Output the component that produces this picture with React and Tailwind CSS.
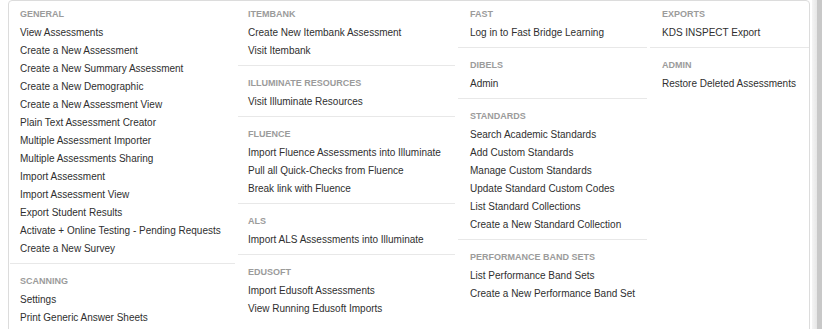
import React from 'react';

const COLUMNS = [
  {
    pad: 'px-[10px]',
    sections: [
      {
        title: 'General',
        links: [
          'View Assessments',
          'Create a New Assessment',
          'Create a New Summary Assessment',
          'Create a New Demographic',
          'Create a New Assessment View',
          'Plain Text Assessment Creator',
          'Multiple Assessment Importer',
          'Multiple Assessments Sharing',
          'Import Assessment',
          'Import Assessment View',
          'Export Student Results',
          'Activate + Online Testing - Pending Requests',
          'Create a New Survey',
        ],
      },
      { title: 'Scanning', links: ['Settings', 'Print Generic Answer Sheets'] },
    ],
  },
  {
    pad: 'px-[10px]',
    sections: [
      { title: 'Itembank', links: ['Create New Itembank Assessment', 'Visit Itembank'] },
      { title: 'Illuminate Resources', links: ['Visit Illuminate Resources'] },
      {
        title: 'Fluence',
        links: [
          'Import Fluence Assessments into Illuminate',
          'Pull all Quick-Checks from Fluence',
          'Break link with Fluence',
        ],
      },
      { title: 'ALS', links: ['Import ALS Assessments into Illuminate'] },
      { title: 'Edusoft', links: ['Import Edusoft Assessments', 'View Running Edusoft Imports'] },
    ],
  },
  {
    pad: 'px-[12px]',
    sections: [
      { title: 'Fast', links: ['Log in to Fast Bridge Learning'] },
      { title: 'Dibels', links: ['Admin'] },
      {
        title: 'Standards',
        links: [
          'Search Academic Standards',
          'Add Custom Standards',
          'Manage Custom Standards',
          'Update Standard Custom Codes',
          'List Standard Collections',
          'Create a New Standard Collection',
        ],
      },
      {
        title: 'Performance Band Sets',
        links: ['List Performance Band Sets', 'Create a New Performance Band Set'],
      },
    ],
  },
  {
    pad: 'px-[12px]',
    sections: [
      { title: 'Exports', links: ['KDS INSPECT Export'] },
      { title: 'Admin', links: ['Restore Deleted Assessments'] },
    ],
  },
];

const MenuColumn = ({ column }) => (
  <div className="flex flex-col">
    {column.sections.map((section, i) => (
      <div
        key={section.title}
        className={
          i === 0
            ? `${column.pad} pt-[4px] pb-[5px]`
            : `${column.pad} pt-[8px] pb-[5px] border-t border-[#e8e8e8]`
        }
      >
        <div className="mb-[1px] text-[9px] leading-[18px] font-bold uppercase text-[#9b9b9b]">
          {section.title}
        </div>
        <ul>
          {section.links.map(link => (
            <li key={link} className="text-[10px] leading-[18px] text-[#2f2f2f] whitespace-nowrap">
              <a href="#" onClick={e => e.preventDefault()}>
                {link}
              </a>
            </li>
          ))}
        </ul>
      </div>
    ))}
  </div>
);

export default function App() {
  return (
    <div className="flex h-[329px] w-[822px] overflow-hidden bg-white pl-[8px] font-['Liberation_Sans',Arial,sans-serif]">
      <div className="w-[802px] h-[340px] rounded-t-[4px] border border-[#dcdcdc] bg-white">
        <div className="grid grid-cols-[225px_217px_189px_1fr] gap-x-[3px] pl-[1px]">
          {COLUMNS.map((column, i) => (
            <MenuColumn key={i} column={column} />
          ))}
        </div>
      </div>
      <div className="flex flex-1">
        <div className="w-[2px] bg-white" />
        <div className="w-[5px] bg-gradient-to-r from-[#f4f4f4] to-[#e6e6e6]" />
        <div className="flex-1 bg-[#c8c8c8]" />
      </div>
    </div>
  );
}
